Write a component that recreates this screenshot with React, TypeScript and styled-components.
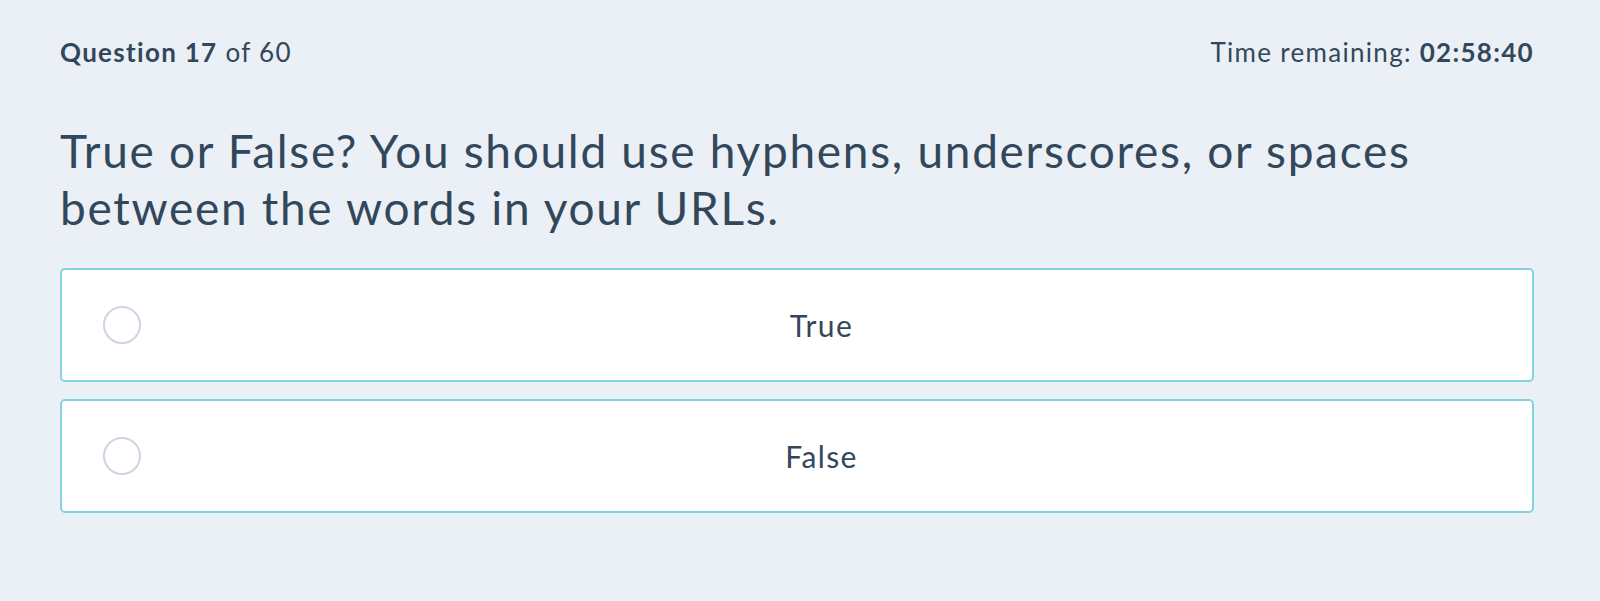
import React from "react";
import styled, { createGlobalStyle } from "styled-components";

const GlobalStyle = createGlobalStyle`
  html, body {
    margin: 0;
    padding: 0;
    background: #eaf0f6;
  }
  body {
    font-family: Lato, "Open Sans", Arial, sans-serif;
    color: #33475b;
  }
`;

const Page = styled.div`
  box-sizing: border-box;
  min-height: 601px;
  padding: 36px 66px 0 60px;
  background: #eaf0f6;
`;

const Header = styled.div`
  display: flex;
  justify-content: space-between;
  align-items: baseline;
  font-size: 26px;
  line-height: 32px;
  letter-spacing: 1.3px;
  color: #33475b;
`;

const Strong = styled.strong`
  font-weight: 700;
`;

const Title = styled.h1`
  margin: 54px 0 0;
  font-size: 46px;
  line-height: 57px;
  font-weight: 400;
  letter-spacing: 1.7px;
  color: #33475b;
`;

const Options = styled.div`
  display: flex;
  flex-direction: column;
  gap: 17px;
  margin-top: 32px;
`;

const Option = styled.label`
  box-sizing: border-box;
  display: flex;
  align-items: center;
  height: 114px;
  padding: 0 30px 0 41px;
  background: #ffffff;
  border: 2px solid #84d2de;
  border-radius: 5px;
  cursor: pointer;
`;

const Radio = styled.span`
  box-sizing: border-box;
  flex: 0 0 38px;
  width: 38px;
  height: 38px;
  border: 2px solid #cbd6e2;
  border-radius: 50%;
  background: #ffffff;
`;

const OptionText = styled.span`
  flex: 1;
  text-align: center;
  font-size: 30px;
  line-height: 36px;
  letter-spacing: 1.4px;
  color: #33475b;
`;

export default function App() {
  return (
    <>
      <GlobalStyle />
      <Page>
        <Header>
          <span>
            <Strong>Question 17</Strong> of 60
          </span>
          <span>
            Time remaining: <Strong>02:58:40</Strong>
          </span>
        </Header>
        <Title>
          True or False? You should use hyphens, underscores, or spaces
          <br />
          between the words in your URLs.
        </Title>
        <Options>
          <Option>
            <Radio />
            <OptionText>True</OptionText>
          </Option>
          <Option>
            <Radio />
            <OptionText>False</OptionText>
          </Option>
        </Options>
      </Page>
    </>
  );
}
